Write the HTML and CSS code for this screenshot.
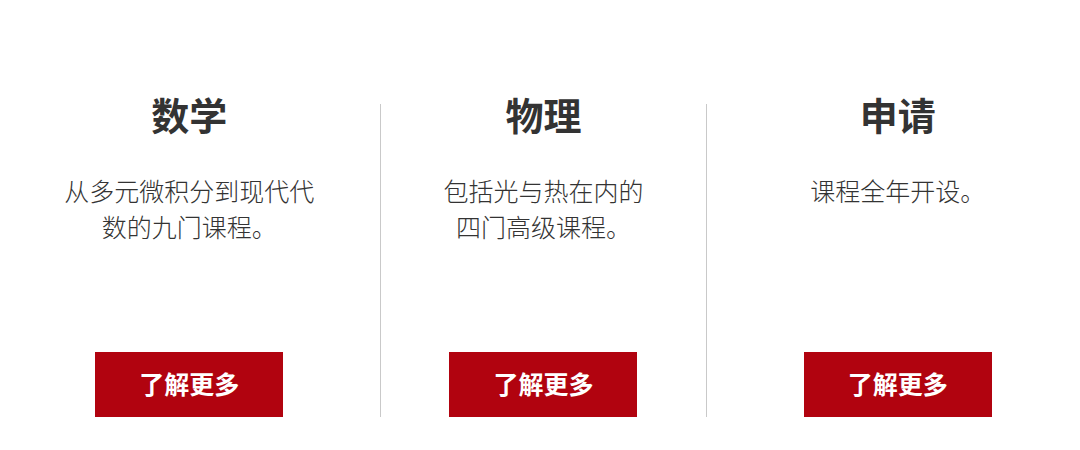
FILE: index.html
```html
<!DOCTYPE html>
<html lang="zh-CN">
<head>
    <meta charset="UTF-8">
    <meta name="viewport" content="width=device-width, initial-scale=1.0">
    <title>课程</title>
    <link rel="stylesheet" href="styles.css">
</head>
<body>
    <section class="features">
        <div class="feature">
            <h2 class="feature-title">数学</h2>
            <p class="feature-text">从多元微积分到现代代数的九门课程。</p>
            <a class="btn" href="#">了解更多</a>
        </div>
        <div class="feature feature-mid">
            <h2 class="feature-title">物理</h2>
            <p class="feature-text">包括光与热在内的四门高级课程。</p>
            <a class="btn" href="#">了解更多</a>
        </div>
        <div class="feature">
            <h2 class="feature-title">申请</h2>
            <p class="feature-text">课程全年开设。</p>
            <a class="btn" href="#">了解更多</a>
        </div>
    </section>
</body>
</html>
```

FILE: styles.css
```css
/* 三栏课程介绍 */
body {
    margin: 0;
    background: #fff;
    font-family: "Noto Sans CJK SC", "Noto Sans", sans-serif;
    color: #333;
}

.features {
    display: grid;
    grid-template-columns: repeat(3, 1fr);
    width: 1063px;
    margin: 104px 0 0 12px;
}

.feature {
    display: flex;
    flex-direction: column;
    align-items: center;
    height: 313px;
    padding: 0 47px;
    text-align: center;
}

/* 中间一栏左右两条分隔线 */
.feature-mid {
    margin: 0 14px;
    padding: 0 56px;
    border-left: 1px solid #c9c9c9;
    border-right: 1px solid #c9c9c9;
}

.feature-title {
    margin: -9px 0 0;
    font-size: 38px;
    line-height: 38px;
    font-weight: 700;
    color: #333;
}

.feature-text {
    margin: 39px 0 0;
    font-size: 25px;
    line-height: 36px;
    font-weight: 300;
    color: #333;
}

.btn {
    display: flex;
    align-items: center;
    justify-content: center;
    box-sizing: border-box;
    margin-top: auto;
    width: 188px;
    height: 65px;
    padding-bottom: 3px;
    background: #b1030f;
    color: #fff;
    font-size: 25px;
    font-weight: 700;
    text-decoration: none;
}
```
